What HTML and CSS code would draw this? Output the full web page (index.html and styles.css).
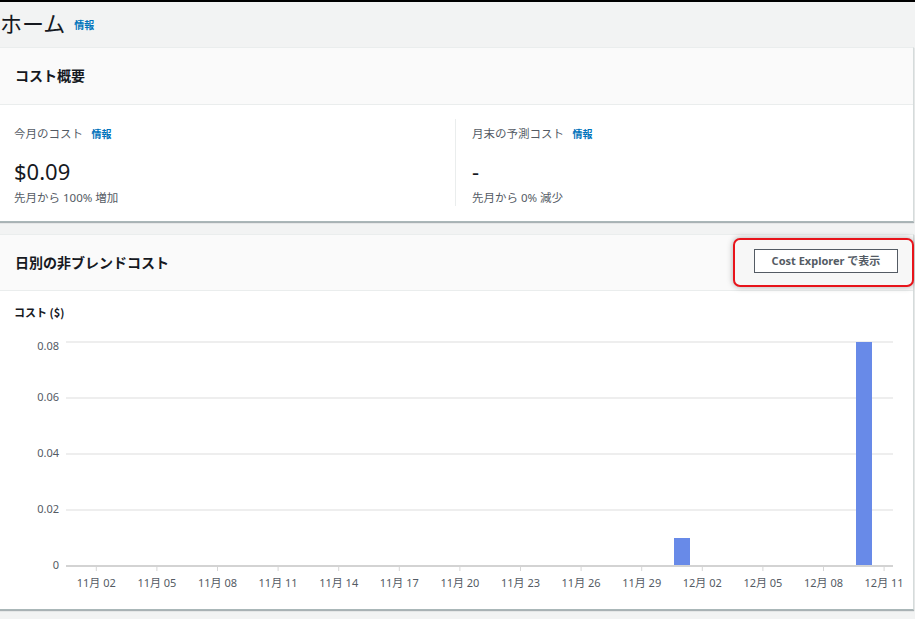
FILE: index.html
```html
<!DOCTYPE html>
<html lang="ja">
<head>
<meta charset="utf-8">
<title>ホーム</title>
<link rel="stylesheet" href="styles.css">
</head>
<body>
<div class="topbar"></div>
<div class="page-head">
  <h1 class="page-title">ホーム</h1>
  <a class="info-link">情報</a>
</div>

<section class="card">
  <div class="card-header">
    <h2 class="card-title">コスト概要</h2>
  </div>
  <div class="card-body summary">
    <div class="metric">
      <div class="metric-label">今月のコスト <a class="info-link small">情報</a></div>
      <div class="metric-value">$0.09</div>
      <div class="metric-note">先月から 100% 増加</div>
    </div>
    <div class="metric metric-right">
      <div class="metric-label">月末の予測コスト <a class="info-link small">情報</a></div>
      <div class="metric-value">-</div>
      <div class="metric-note">先月から 0% 減少</div>
    </div>
  </div>
</section>

<section class="card card-chart">
  <div class="card-header header-flex">
    <h2 class="card-title">日別の非ブレンドコスト</h2>
    <span class="highlight"><button class="btn">Cost Explorer で表示</button></span>
  </div>
  <div class="card-body chart-body">
    <div class="axis-title">コスト ($)</div>
    <svg class="chart" width="914" height="289" viewBox="0 0 914 289">
      <g class="grid">
        <line x1="66" y1="22" x2="893" y2="22"/>
        <line x1="66" y1="78" x2="893" y2="78"/>
        <line x1="66" y1="134" x2="893" y2="134"/>
        <line x1="66" y1="190" x2="893" y2="190"/>
      </g>
      <g class="ylabels">
        <text x="59" y="27">0.08</text>
        <text x="59" y="78">0.06</text>
        <text x="59" y="134">0.04</text>
        <text x="59" y="190">0.02</text>
        <text x="59" y="246">0</text>
      </g>
      <rect class="bar" x="674" y="218" width="16" height="28"/>
      <rect class="bar" x="856" y="22" width="16" height="224"/>
      <line class="axis" x1="66" y1="246" x2="893" y2="246"/>
      <g class="ticks">
        <line x1="96.3" y1="247" x2="96.3" y2="251"/>
        <line x1="156.9" y1="247" x2="156.9" y2="251"/>
        <line x1="217.5" y1="247" x2="217.5" y2="251"/>
        <line x1="278.1" y1="247" x2="278.1" y2="251"/>
        <line x1="338.7" y1="247" x2="338.7" y2="251"/>
        <line x1="399.3" y1="247" x2="399.3" y2="251"/>
        <line x1="459.9" y1="247" x2="459.9" y2="251"/>
        <line x1="520.5" y1="247" x2="520.5" y2="251"/>
        <line x1="581.1" y1="247" x2="581.1" y2="251"/>
        <line x1="641.7" y1="247" x2="641.7" y2="251"/>
        <line x1="702.3" y1="247" x2="702.3" y2="251"/>
        <line x1="762.9" y1="247" x2="762.9" y2="251"/>
        <line x1="823.5" y1="247" x2="823.5" y2="251"/>
        <line x1="884.1" y1="247" x2="884.1" y2="251"/>
      </g>
      <g class="xlabels">
        <text x="96.3" y="267">11月 02</text>
        <text x="156.9" y="267">11月 05</text>
        <text x="217.5" y="267">11月 08</text>
        <text x="278.1" y="267">11月 11</text>
        <text x="338.7" y="267">11月 14</text>
        <text x="399.3" y="267">11月 17</text>
        <text x="459.9" y="267">11月 20</text>
        <text x="520.5" y="267">11月 23</text>
        <text x="581.1" y="267">11月 26</text>
        <text x="641.7" y="267">11月 29</text>
        <text x="702.3" y="267">12月 02</text>
        <text x="762.9" y="267">12月 05</text>
        <text x="823.5" y="267">12月 08</text>
        <text x="884.1" y="267">12月 11</text>
      </g>
    </svg>
  </div>
</section>
</body>
</html>
```

FILE: styles.css
```css
html, body {
  margin: 0;
  padding: 0;
}
body {
  background: #f2f3f3;
  font-family: "Noto Sans", "Noto Sans CJK JP", sans-serif;
  color: #16191f;
  width: 915px;
  height: 619px;
  overflow: hidden;
}
.topbar {
  height: 2px;
  background: #000;
}
.page-head {
  height: 45px;
  display: flex;
  align-items: center;
  gap: 9px;
}
.page-title {
  margin: -6px 0 0 0;
  font-size: 22px;
  font-weight: 400;
  line-height: 30px;
  font-family: "Noto Sans CJK JP", sans-serif;
  color: #16191f;
}
.info-link {
  color: #0073bb;
  font-size: 10px;
  font-weight: 700;
  font-family: "Noto Sans CJK JP", sans-serif;
}
.info-link.small {
  font-size: 10px;
  margin-left: 6px;
}
.card {
  width: 913px;
  background: #fff;
  border-top: 1px solid #eaeded;
  border-right: 1px solid #d5dbdb;
  box-shadow: 0 1px 1px 0 rgba(0, 28, 36, 0.3);
  border-bottom: 1px solid #aab7b8;
}
.card-header {
  background: #fafafa;
  border-bottom: 1px solid #eaeded;
  height: 57px;
  padding-left: 15px;
  display: flex;
  align-items: center;
  box-sizing: border-box;
}
.card-title {
  margin: -2px 0 0 0;
  font-size: 14px;
  font-weight: 700;
  font-family: "Noto Sans CJK JP", sans-serif;
  color: #16191f;
  line-height: 20px;
}
.summary {
  display: flex;
  height: 116px;
  padding-top: 14px;
  box-sizing: border-box;
}
.metric {
  width: 442px;
  padding-left: 14px;
  height: 87px;
}
.metric-right {
  border-left: 1px solid #eaeded;
  padding-left: 16px;
}
.metric-label {
  font-size: 11.5px;
  line-height: 16px;
  color: #545b64;
  padding-top: 6px;
  font-family: "Noto Sans CJK JP", sans-serif;
}
.metric-value {
  font-size: 22px;
  line-height: 28px;
  margin-top: 15px;
  height: 28px;
  color: #16191f;
}
.metric-note {
  font-size: 11.5px;
  line-height: 16px;
  color: #545b64;
  margin-top: 5px;
}
.card-chart {
  margin-top: 12px;
}
.header-flex {
  justify-content: space-between;
  height: 56px;
  padding-right: 0;
}
.highlight {
  display: flex;
  align-items: flex-start;
  border: 2px solid #e8141b;
  border-radius: 7px;
  padding: 9px 14px 12px 19px;
  margin-right: -1px;
  box-shadow: 0 0 6px rgba(0, 0, 0, 0.3);
  background: #f7f7f7;
}
.btn {
  width: 144px;
  height: 24px;
  background: #fff;
  border: 1px solid #545b64;
  border-radius: 0;
  color: #545b64;
  font-family: "Noto Sans", "Noto Sans CJK JP", sans-serif;
  font-size: 11px;
  font-weight: 700;
  padding: 0;
  line-height: 22px;
}
.chart-body {
  height: 318px;
  padding-top: 13px;
  box-sizing: border-box;
}
.axis-title {
  font-size: 11px;
  font-weight: 700;
  line-height: 16px;
  padding-left: 14px;
  font-family: "Noto Sans CJK JP", sans-serif;
  color: #16191f;
}
.chart {
  display: block;
}
.grid line {
  stroke: #eeeeee;
  stroke-width: 2;
}
.axis {
  stroke: #d3d3d3;
  stroke-width: 2;
}
.ticks line {
  stroke: #d5d5d5;
  stroke-width: 1;
}
.bar {
  fill: #688ae8;
}
.ylabels text {
  font-family: "Noto Sans", sans-serif;
  font-size: 11px;
  fill: #545b64;
  text-anchor: end;
  dominant-baseline: middle;
}
.xlabels text {
  font-family: "Noto Sans", "Noto Sans CJK JP", sans-serif;
  font-size: 11px;
  fill: #545b64;
  text-anchor: middle;
}
```
